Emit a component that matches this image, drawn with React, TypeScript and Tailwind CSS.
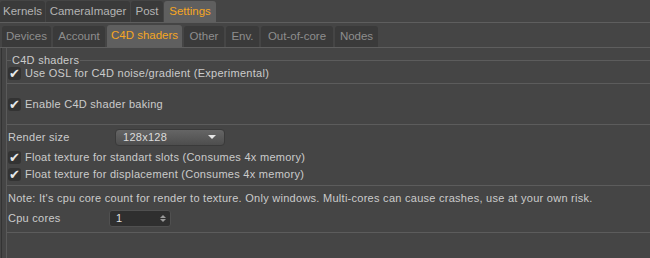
import React from 'react'

const topTabs = [
  { label: 'Kernels', w: 'w-[45px]' },
  { label: 'CameraImager', w: 'w-[84px]' },
  { label: 'Post', w: 'w-[32px]' },
  { label: 'Settings', w: 'w-[52px]', active: true },
]

const subTabs = [
  { label: 'Devices', w: 'w-[49px]' },
  { label: 'Account', w: 'w-[52px]' },
  { label: 'C4D shaders', w: 'w-[75px]', active: true },
  { label: 'Other', w: 'w-[40px]' },
  { label: 'Env.', w: 'w-[33px]' },
  { label: 'Out-of-core', w: 'w-[72px]' },
  { label: 'Nodes', w: 'w-[43px]' },
]

function Check({ label }: { label: string }) {
  return (
    <div className="flex items-center h-[17px]">
      <span className="w-[13px] h-[13px] rounded-[3px] bg-[#333333] flex items-center justify-center text-[#e8e8e8] text-[13px] leading-none">
        ✔
      </span>
      <span className="ml-[4px]">{label}</span>
    </div>
  )
}

export default function App() {
  return (
    <div
      className="w-[650px] h-[258px] bg-[#454545] overflow-hidden text-[11px] tracking-[0.27px] text-[#cbcbcb] leading-none"
      style={{ fontFamily: '"Liberation Sans", Arial, sans-serif' }}
    >
      {/* top tabs */}
      <div className="flex items-end h-[23px] gap-[1px] border-b border-[#5e5e5e]">
        {topTabs.map((t) => (
          <div
            key={t.label}
            className={`${t.w} h-[21px] flex items-center justify-center rounded-t-[3px] text-[11.5px] tracking-normal ${
              t.active ? 'bg-[#5f5f5f] text-[#f5a623]' : 'bg-[#3a3a3a] text-[#b4b4b4]'
            }`}
          >
            {t.label}
          </div>
        ))}
      </div>

      {/* sub tabs */}
      <div className="flex items-end h-[25px] gap-[2px] pl-[2px] border-b border-[#5e5e5e]">
        {subTabs.map((t) => (
          <div
            key={t.label}
            className={`${t.w} flex items-center justify-center rounded-t-[3px] text-[11.5px] tracking-normal ${
              t.active ? 'h-[22px] bg-[#5f5f5f] text-[#f5a623]' : 'h-[21px] bg-[#3a3a3a] text-[#8e8e8e]'
            }`}
          >
            {t.label}
          </div>
        ))}
      </div>

      {/* content */}
      <div className="flex h-[210px]">
        <div className="w-[2px] border-r border-[#333333]" />
        <div className="w-[5px] border-r border-[#5a5a5a]" />
        <div className="flex-1 flex flex-col pt-[12px]">
          <div className="relative border-t border-[#5c5c5c]">
            <span className="absolute left-[4px] -top-[6px] bg-[#454545] px-[1px] h-[10px]">C4D shaders</span>
          </div>
          <div className="pl-[1px] pt-[4px]">
            <Check label="Use OSL for C4D noise/gradient (Experimental)" />
          </div>
          <div className="mt-[1px] border-t border-[#5c5c5c]" />
          <div className="pl-[1px] pt-[12px]">
            <Check label="Enable C4D shader baking" />
          </div>
          <div className="mt-[11px] border-t border-[#5c5c5c]" />
          <div className="pl-[1px] flex items-center h-[24px]">
            <span className="w-[107px]">Render size</span>
            <div className="w-[110px] h-[17px] rounded-[4px] bg-gradient-to-b from-[#656565] to-[#4e4e4e] border border-[#3a3a3a] flex items-center justify-between pl-[7px] pr-[8px] text-[#dcdcdc]">
              <span>128x128</span>
              <span className="w-0 h-0 border-l-[4px] border-r-[4px] border-t-[4px] border-l-transparent border-r-transparent border-t-[#e6e6e6]" />
            </div>
          </div>
          <div className="pl-[1px]">
            <Check label="Float texture for standart slots (Consumes 4x memory)" />
            <Check label="Float texture for displacement (Consumes 4x memory)" />
          </div>
          <div className="mt-[2px] border-t border-[#5c5c5c]" />
          <div className="pl-[1px] pt-[7px] h-[19px]">
            Note: It's cpu core count for render to texture. Only windows. Multi-cores can cause crashes, use at your own risk.
          </div>
          <div className="pl-[1px] flex items-center h-[26px]">
            <span className="w-[101px]">Cpu cores</span>
            <div className="w-[62px] h-[17px] rounded-[3px] bg-[#2f2f2f] border border-[#505050] flex items-center justify-between pl-[6px] pr-[4px] text-[#e0e0e0]">
              <span>1</span>
              <span className="flex flex-col gap-[1px] items-center">
                <span className="w-0 h-0 border-l-[3px] border-r-[3px] border-b-[3px] border-l-transparent border-r-transparent border-b-[#9a9a9a]" />
                <span className="w-0 h-0 border-l-[3px] border-r-[3px] border-t-[3px] border-l-transparent border-r-transparent border-t-[#9a9a9a]" />
              </span>
            </div>
          </div>
          <div className="mt-[1px] border-t border-[#5c5c5c]" />
        </div>
      </div>
    </div>
  )
}
